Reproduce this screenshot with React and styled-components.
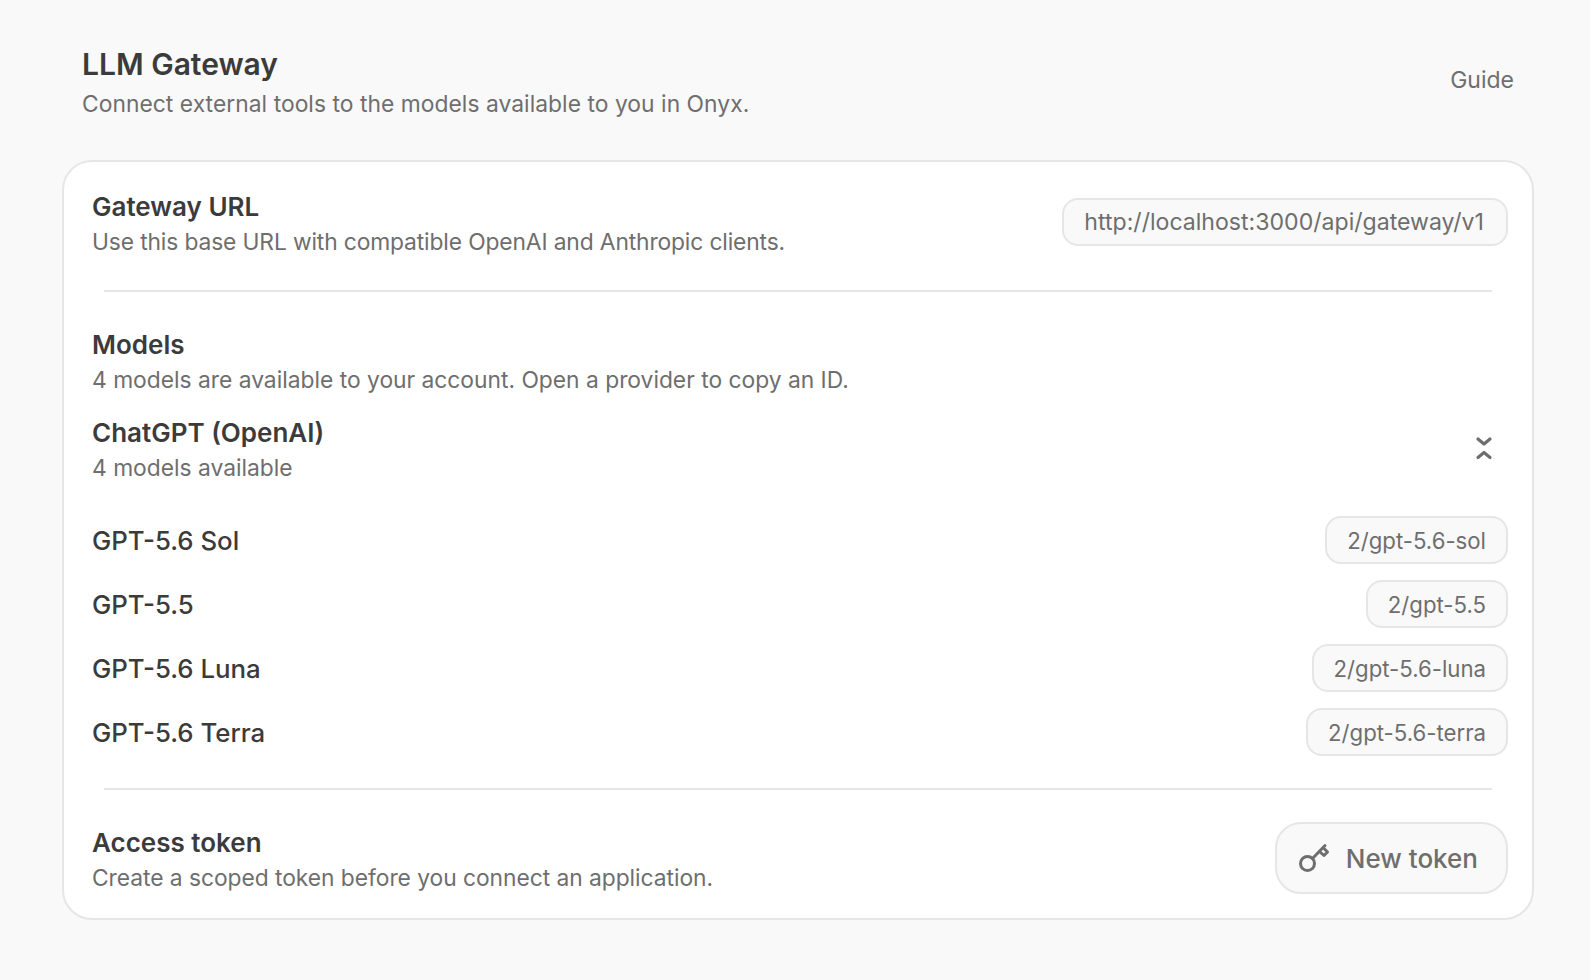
import styled, { createGlobalStyle } from 'styled-components'

const GlobalStyle = createGlobalStyle`
  html, body {
    margin: 0;
    background: #f9f9f9;
    font-family: 'Inter', 'Liberation Sans', sans-serif;
  }
`

const Page = styled.div`
  width: 1590px;
  height: 980px;
  box-sizing: border-box;
  padding: 42px 56px 0 62px;
  overflow: hidden;
`

const Header = styled.header`
  display: flex;
  justify-content: space-between;
  align-items: center;
  padding: 0 20px 0 20px;
  margin-bottom: 38px;
`

const PageTitle = styled.h1`
  margin: 0;
  font-size: 30px;
  line-height: 44px;
  font-weight: 600;
  color: #3b3b3b;
`

const Muted = styled.p`
  margin: 0;
  font-size: 22.8px;
  line-height: 36px;
  font-weight: 400;
  color: #6e6e6e;
  letter-spacing: ${({ $tracking }) => $tracking || 0}px;
`

const GuideLink = styled.a`
  font-size: 23px;
  line-height: 36px;
  padding-bottom: 4px;
  color: #6e6e6e;
`

const Card = styled.section`
  box-sizing: border-box;
  width: 1472px;
  height: 760px;
  background: #fff;
  border: 2px solid #e6e6e6;
  border-radius: 30px;
  padding: 28px 24px 24px 28px;
`

const SpreadRow = styled.div`
  display: flex;
  justify-content: space-between;
  align-items: ${({ $align }) => $align || 'center'};
`

const SectionTitle = styled.h2`
  margin: 0;
  font-size: 26px;
  line-height: 34px;
  font-weight: 600;
  color: #3b3b3b;
`

const Divider = styled.hr`
  border: 0;
  height: 2px;
  background: #e6e6e6;
  margin: ${({ $top }) => $top}px 16px ${({ $bottom }) => $bottom}px 12px;
`

const Chip = styled.code`
  box-sizing: border-box;
  display: inline-flex;
  align-items: center;
  height: 48px;
  padding: 0 20px;
  background: #f9f9f9;
  border: 2px solid #e6e6e6;
  border-radius: 16px;
  font-family: inherit;
  font-size: 22.2px;
  color: #6e6e6e;
`

const UrlChip = styled(Chip)`
  margin-top: 8px;
  padding-right: 22px;
  font-size: 23.1px;
`

const Provider = styled(SpreadRow)`
  margin-top: 18px;
  margin-bottom: 30px;
  padding-right: 8px;
`

const CollapseButton = styled.span`
  display: flex;
  margin-top: -6px;
`

const ModelList = styled.ul`
  display: flex;
  flex-direction: column;
  gap: 16px;
  margin: 0;
  padding: 0;
  list-style: none;
`

const ModelName = styled.span`
  font-size: 25.8px;
  font-weight: 500;
  color: #3b3b3b;
`

const TokenButton = styled.button`
  display: inline-flex;
  align-items: center;
  gap: 16px;
  box-sizing: border-box;
  height: 72px;
  margin-top: -4px;
  padding: 0 28px 0 21px;
  background: #f9f9f9;
  border: 2px solid #e6e6e6;
  border-radius: 26px;
  font-family: inherit;
  font-size: 26px;
  font-weight: 500;
  color: #6e6e6e;
`

const models = [
  { name: 'GPT-5.6 Sol', id: '2/gpt-5.6-sol' },
  { name: 'GPT-5.5', id: '2/gpt-5.5' },
  { name: 'GPT-5.6 Luna', id: '2/gpt-5.6-luna' },
  { name: 'GPT-5.6 Terra', id: '2/gpt-5.6-terra' },
]

function CollapseIcon() {
  return (
    <svg width="32" height="32" viewBox="0 0 32 32" fill="none" stroke="#6e6e6e" strokeWidth="3.2" strokeLinecap="round" strokeLinejoin="round">
      <path d="M10 7l6 5 6-5" />
      <path d="M10 25.5l6-5 6 5" />
    </svg>
  )
}

function KeyIcon() {
  return (
    <svg width="32" height="32" viewBox="0 0 32 32" fill="none" stroke="#6e6e6e" strokeWidth="3" strokeLinecap="round" strokeLinejoin="round">
      <circle cx="9.5" cy="21.5" r="7" />
      <path d="M14.5 16.5L27 3.5" />
      <path d="M21.5 9.5l4.5 4 3.5-3.5-4-4" />
    </svg>
  )
}

export default function App() {
  return (
    <>
      <GlobalStyle />
      <Page>
        <Header>
          <div>
            <PageTitle>LLM Gateway</PageTitle>
            <Muted $tracking={0.05}>Connect external tools to the models available to you in Onyx.</Muted>
          </div>
          <GuideLink>Guide</GuideLink>
        </Header>
        <Card>
          <SpreadRow $align="flex-start">
            <div>
              <SectionTitle>Gateway URL</SectionTitle>
              <Muted $tracking={-0.13}>Use this base URL with compatible OpenAI and Anthropic clients.</Muted>
            </div>
            <UrlChip>http://localhost:3000/api/gateway/v1</UrlChip>
          </SpreadRow>
          <Divider $top={30} $bottom={36} />
          <SectionTitle>Models</SectionTitle>
          <Muted>4 models are available to your account. Open a provider to copy an ID.</Muted>
          <Provider>
            <div>
              <SectionTitle>ChatGPT (OpenAI)</SectionTitle>
              <Muted>4 models available</Muted>
            </div>
            <CollapseButton>
              <CollapseIcon />
            </CollapseButton>
          </Provider>
          <ModelList>
            {models.map((model) => (
              <li key={model.id}>
                <SpreadRow>
                  <ModelName>{model.name}</ModelName>
                  <Chip>{model.id}</Chip>
                </SpreadRow>
              </li>
            ))}
          </ModelList>
          <Divider $top={32} $bottom={36} />
          <SpreadRow $align="flex-start">
            <div>
              <SectionTitle>Access token</SectionTitle>
              <Muted $tracking={-0.04}>Create a scoped token before you connect an application.</Muted>
            </div>
            <TokenButton>
              <KeyIcon />
              New token
            </TokenButton>
          </SpreadRow>
        </Card>
      </Page>
    </>
  )
}
